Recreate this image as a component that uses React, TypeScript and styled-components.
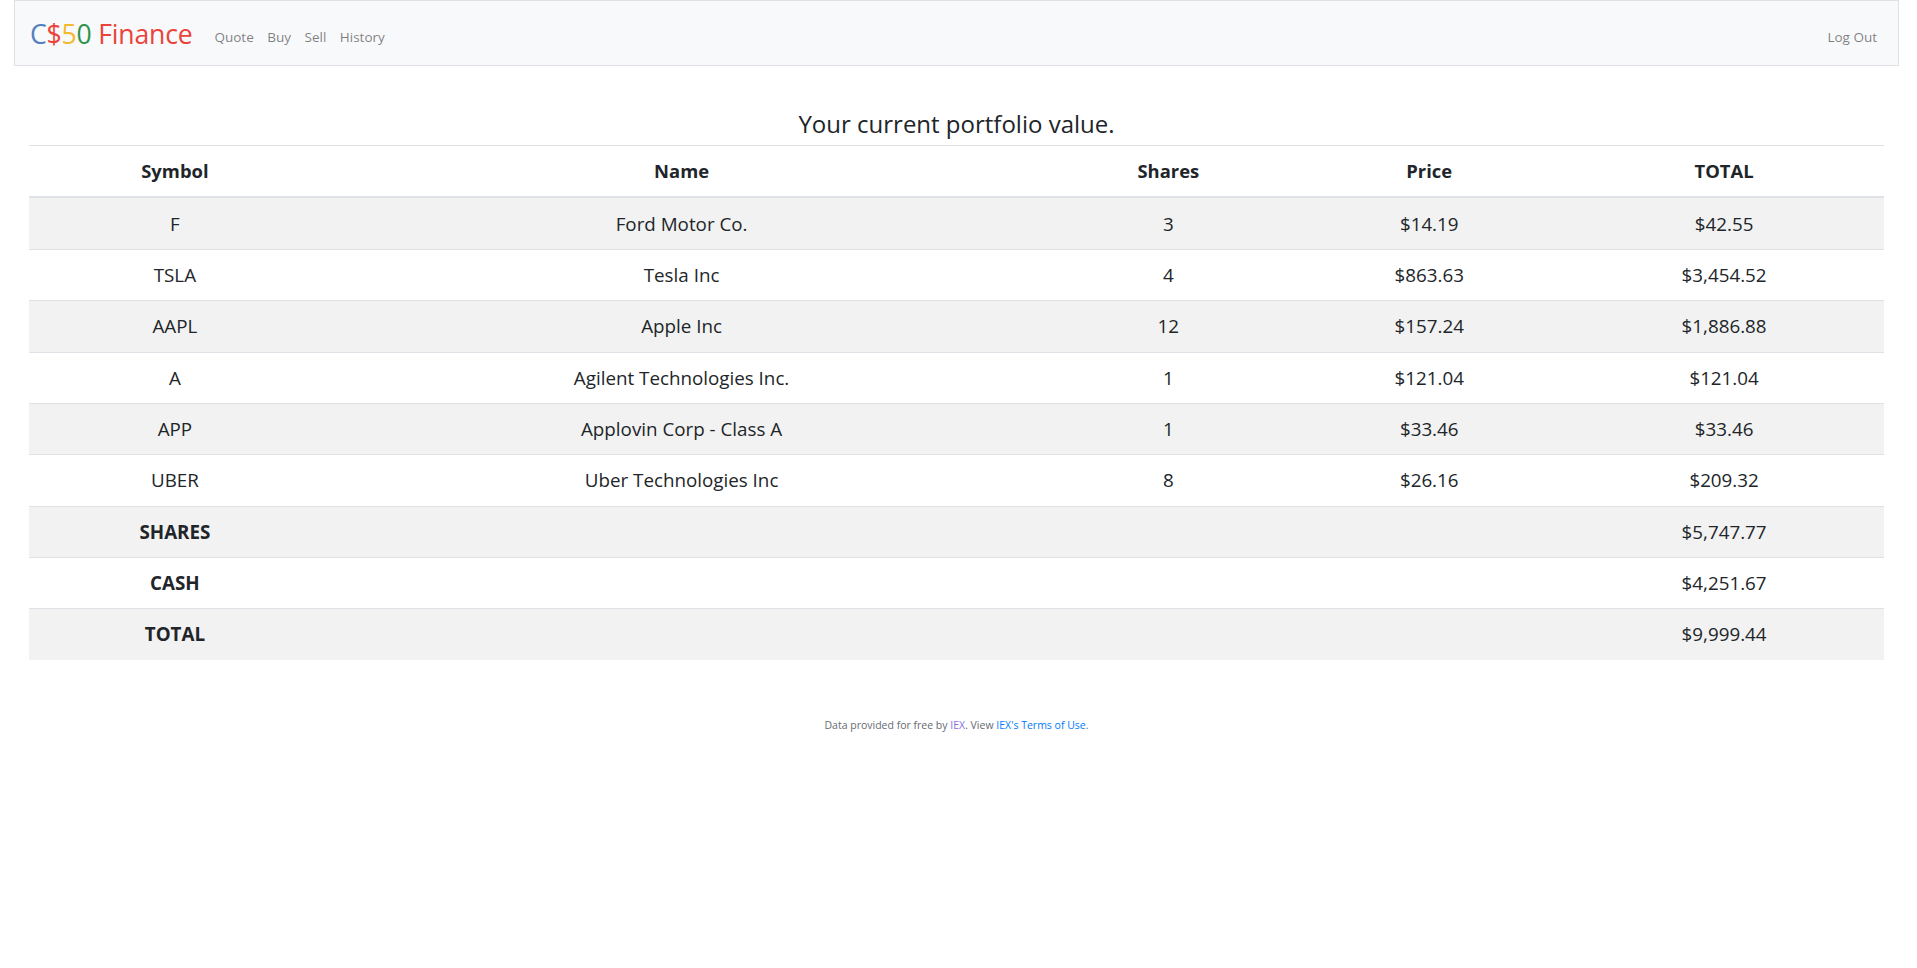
import React from "react";
import styled, { createGlobalStyle } from "styled-components";

const GlobalStyle = createGlobalStyle`
  html, body {
    margin: 0;
    padding: 0;
    background: #ffffff;
  }
  body {
    font-family: "Open Sans", "Noto Sans", sans-serif;
    color: #212529;
  }
  * { box-sizing: border-box; }
`;

const Page = styled.div`
  padding: 0 18px 0 14px;
`;

const Navbar = styled.nav`
  height: 66px;
  display: flex;
  align-items: center;
  padding: 0 21px 0 15px;
  background: #f8f9fa;
  border: 1px solid #dee2e6;
`;

const Brand = styled.a`
  font-size: 26.6px;
  line-height: 1;
  margin-right: 22px;
  text-decoration: none;
  letter-spacing: -0.2px;
  padding-top: 2px;
`;

const BrandChar = styled.span<{ $c: string }>`
  color: ${(p) => p.$c};
`;

const NavList = styled.ul<{ $grow?: boolean }>`
  display: flex;
  gap: 13.5px;
  list-style: none;
  margin: 0;
  padding: 6px 0 0 0;
  flex: ${(p) => (p.$grow ? "1" : "0 0 auto")};
`;

const NavLink = styled.a`
  font-size: 13.5px;
  color: rgba(0, 0, 0, 0.5);
  text-decoration: none;
`;

const Main = styled.main`
  padding: 42px 15px 0 15px;
`;

const Title = styled.h1`
  margin: 0 0 5.5px 0;
  font-size: 24px;
  font-weight: 400;
  line-height: 31.2px;
  text-align: center;
  color: #212529;
`;

const Table = styled.table`
  width: 100%;
  border-collapse: separate;
  border-spacing: 0;
  table-layout: fixed;
  font-size: 18.8px;
`;

const Th = styled.th`
  padding: 12px;
  line-height: 26px;
  font-weight: 700;
  font-size: 18.4px;
  text-align: center;
  border-top: 1px solid #dee2e6;
  border-bottom: 2px solid #dee2e6;
`;

const Tr = styled.tr<{ $striped: boolean }>`
  background: ${(p) => (p.$striped ? "#f2f2f2" : "#ffffff")};
  &:not(:first-child) td {
    border-top: 1px solid #dee2e6;
  }
  &:first-child td {
    padding-top: 13px;
  }
`;

const Td = styled.td<{ $bold?: boolean }>`
  padding: 12px;
  line-height: 26.33px;
  text-align: center;
  font-weight: ${(p) => (p.$bold ? 700 : 400)};
`;

const Footer = styled.footer`
  margin-top: 57px;
  text-align: center;
  font-size: 10.5px;
  line-height: 16px;
  color: #656b72;
`;

const FooterLink = styled.a<{ $visited?: boolean }>`
  color: ${(p) => (p.$visited ? "#8a6fe0" : "#007bff")};
  text-decoration: none;
`;

const holdings = [
  { symbol: "F", name: "Ford Motor Co.", shares: "3", price: "$14.19", total: "$42.55" },
  { symbol: "TSLA", name: "Tesla Inc", shares: "4", price: "$863.63", total: "$3,454.52" },
  { symbol: "AAPL", name: "Apple Inc", shares: "12", price: "$157.24", total: "$1,886.88" },
  { symbol: "A", name: "Agilent Technologies Inc.", shares: "1", price: "$121.04", total: "$121.04" },
  { symbol: "APP", name: "Applovin Corp - Class A", shares: "1", price: "$33.46", total: "$33.46" },
  { symbol: "UBER", name: "Uber Technologies Inc", shares: "8", price: "$26.16", total: "$209.32" },
];

const summary = [
  { label: "SHARES", value: "$5,747.77" },
  { label: "CASH", value: "$4,251.67" },
  { label: "TOTAL", value: "$9,999.44" },
];

const colWidths = ["15.73%", "38.9%", "13.58%", "14.55%", "17.24%"];

export default function App() {
  return (
    <>
      <GlobalStyle />
      <Page>
        <Navbar>
          <Brand href="#">
            <BrandChar $c="#537fbe">C</BrandChar>
            <BrandChar $c="#ea433b">$</BrandChar>
            <BrandChar $c="#f5b82e">5</BrandChar>
            <BrandChar $c="#2e944b">0</BrandChar>{" "}
            <BrandChar $c="#ea433b">Finance</BrandChar>
          </Brand>
          <NavList $grow>
            <li><NavLink href="#">Quote</NavLink></li>
            <li><NavLink href="#">Buy</NavLink></li>
            <li><NavLink href="#">Sell</NavLink></li>
            <li><NavLink href="#">History</NavLink></li>
          </NavList>
          <NavList>
            <li><NavLink href="#">Log Out</NavLink></li>
          </NavList>
        </Navbar>
        <Main>
          <Title>Your current portfolio value.</Title>
          <Table>
            <colgroup>
              {colWidths.map((w, i) => (
                <col key={i} style={{ width: w }} />
              ))}
            </colgroup>
            <thead>
              <tr>
                <Th>Symbol</Th>
                <Th>Name</Th>
                <Th>Shares</Th>
                <Th>Price</Th>
                <Th>TOTAL</Th>
              </tr>
            </thead>
            <tbody>
              {holdings.map((h, i) => (
                <Tr key={h.symbol} $striped={i % 2 === 0}>
                  <Td>{h.symbol}</Td>
                  <Td>{h.name}</Td>
                  <Td>{h.shares}</Td>
                  <Td>{h.price}</Td>
                  <Td>{h.total}</Td>
                </Tr>
              ))}
              {summary.map((s, i) => (
                <Tr key={s.label} $striped={(holdings.length + i) % 2 === 0}>
                  <Td $bold>{s.label}</Td>
                  <Td />
                  <Td />
                  <Td />
                  <Td>{s.value}</Td>
                </Tr>
              ))}
            </tbody>
          </Table>
        </Main>
        <Footer>
          Data provided for free by <FooterLink href="#" $visited>IEX</FooterLink>. View{" "}
          <FooterLink href="#">IEX's Terms of Use</FooterLink>.
        </Footer>
      </Page>
    </>
  );
}
